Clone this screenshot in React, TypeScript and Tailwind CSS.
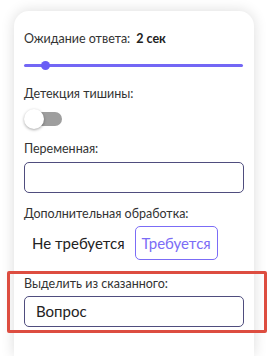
export default function App() {
  return (
    <div className="min-h-[356px] bg-white pl-[14px] pt-[11px] font-['Lato',sans-serif] text-[#333]">
      <div className="w-[240px] min-h-[345px] rounded-t-[15px] bg-white px-[10px] pt-[20px] shadow-[0_0_14px_rgba(0,0,0,0.14)]">
        {/* wait time */}
        <div className="flex items-center gap-[6px] text-[12.5px] leading-[16px]">
          <span>Ожидание ответа:</span>
          <span className="font-bold text-[#222]">2 сек</span>
        </div>
        <div className="relative mt-[14px] h-[9px]">
          <div className="absolute left-0 right-[1px] top-[3px] h-[3px] rounded-full bg-[#7367f5]" />
          <div className="absolute left-[17px] top-0 h-[9px] w-[9px] rounded-full bg-[#6a5df5]" />
        </div>

        {/* silence */}
        <div className="mt-[16px] text-[12.5px] leading-[16px]">Детекция тишины:</div>
        <div className="relative mt-[7px] h-[20px] w-[38px]">
          <div className="absolute left-[6px] top-[3px] h-[14px] w-[32px] rounded-full bg-[#9e9e9e]" />
          <div className="absolute left-0 top-0 h-[20px] w-[20px] rounded-full bg-white shadow-[0_1px_3px_rgba(0,0,0,0.35)]" />
        </div>

        {/* variable */}
        <div className="mt-[12px] text-[12.5px] leading-[16px]">Переменная:</div>
        <div className="mt-[5px] h-[31px] w-[220px] rounded-[5px] border border-[#4f4d7e]" />

        {/* processing */}
        <div className="mt-[13px] text-[12.5px] leading-[16px]">Дополнительная обработка:</div>
        <div className="mt-[4px] flex items-center gap-[10px] pl-[8px]">
          <span className="text-[15px] leading-[20px] text-[#222]">Не требуется</span>
          <button className="h-[34px] rounded-[5px] border border-[#7b6cf6] px-[6px] text-[15px] leading-[20px] text-[#7b6cf6]">
            Требуется
          </button>
        </div>

        {/* extract */}
        <div className="relative mt-[16px]">
          <div className="absolute -left-[17px] -right-[23px] -top-[5px] -bottom-[6px] rounded-[2px] border-[3px] border-[#dd4d40]" />
          <div className="text-[12.5px] leading-[16px]">Выделить из сказанного:</div>
          <div className="mt-[4px] flex h-[31px] w-[220px] items-center rounded-[5px] border border-[#4f4d7e] px-[11px] text-[15px] text-[#222]">
            Вопрос
          </div>
        </div>
      </div>
    </div>
  );
}
